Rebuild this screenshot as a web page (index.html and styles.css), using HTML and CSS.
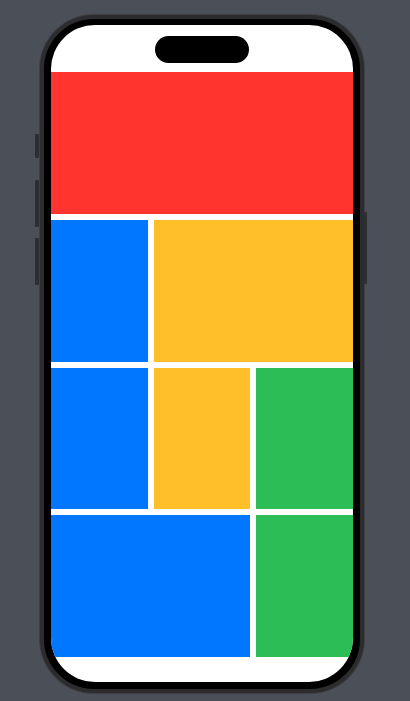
FILE: index.html
```html
<!DOCTYPE html>
<html>
<head>
<meta charset="utf-8">
<link rel="stylesheet" href="styles.css">
</head>
<body>
  <div class="stage">
    <div class="phone">
      <span class="btn btn-action"></span>
      <span class="btn btn-vol-up"></span>
      <span class="btn btn-vol-down"></span>
      <span class="btn btn-power"></span>
      <div class="screen">
        <div class="island"></div>
        <div class="grid">
          <div class="tile red span3"></div>
          <div class="tile blue"></div>
          <div class="tile yellow span2"></div>
          <div class="tile blue"></div>
          <div class="tile yellow"></div>
          <div class="tile green"></div>
          <div class="tile blue span2"></div>
          <div class="tile green"></div>
        </div>
      </div>
    </div>
  </div>
</body>
</html>
```

FILE: styles.css
```css
html, body {
  margin: 0;
  padding: 0;
  background: #4b4f57;
  width: 410px;
  height: 701px;
  overflow: hidden;
}

.stage {
  padding: 15px 0 0 40px;
}

.phone {
  position: relative;
  box-sizing: border-box;
  width: 324px;
  height: 678px;
  border-radius: 54px;
  background: #000;
  border: 4px solid #2c2c2e;
  box-shadow: 0 0 0 1px #3d3f44;
  padding: 6px 7px 7px 7px;
}

.btn {
  position: absolute;
  background: #2d2e31;
  border-radius: 1px;
}

.btn-action { left: -9px; top: 115px; width: 4px; height: 24px; }
.btn-vol-up { left: -9px; top: 161px; width: 4px; height: 47px; }
.btn-vol-down { left: -9px; top: 219px; width: 4px; height: 47px; }
.btn-power { right: -7px; top: 193px; width: 3px; height: 72px; }

.screen {
  position: relative;
  box-sizing: border-box;
  width: 302px;
  height: 657px;
  background: #fff;
  border-radius: 44px;
  overflow: hidden;
  padding-top: 47px;
}

.island {
  position: absolute;
  left: 104px;
  top: 11px;
  width: 94px;
  height: 27px;
  border-radius: 14px;
  background: #000;
}

.grid {
  display: grid;
  grid-template-columns: repeat(3, 1fr);
  grid-template-rows: repeat(4, 141.75px);
  gap: 6px;
}

.tile { }
.span3 { grid-column: span 3; }
.span2 { grid-column: span 2; }

.red { background: #ff342f; }
.blue { background: #0077fe; }
.yellow { background: #febf29; }
.green { background: #2cbd57; }
```
